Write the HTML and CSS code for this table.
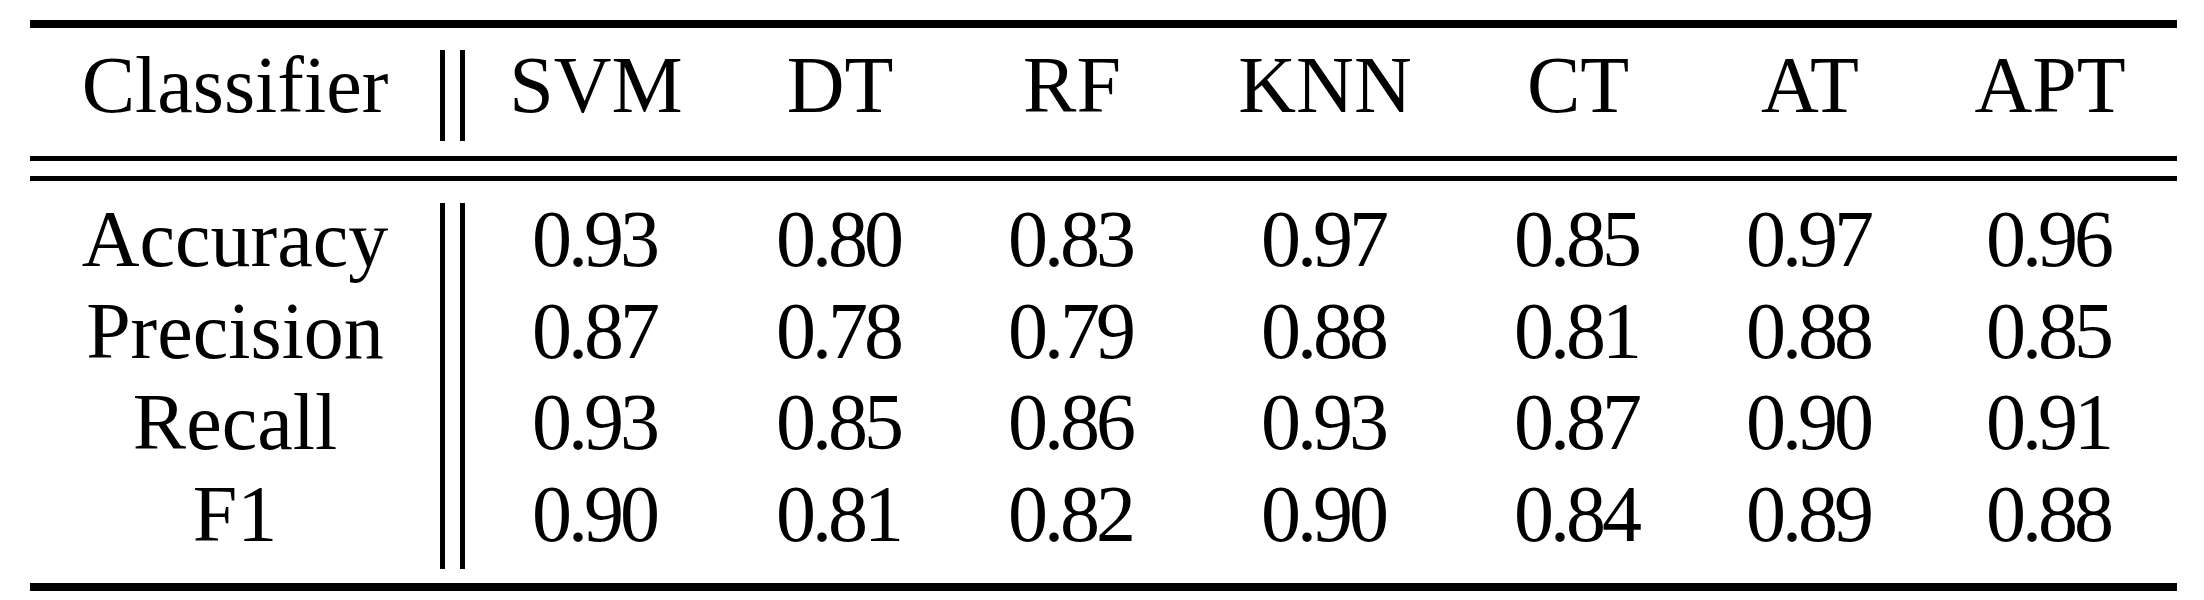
FILE: index.html
```html
<!DOCTYPE html>
<html lang="en">
<head>
<meta charset="utf-8">
<title>Classifier comparison</title>
<link rel="stylesheet" href="styles.css">
</head>
<body>
<div class="table">
  <div class="rule-thick"></div>
  <div class="grid head">
    <div class="cell">Classifier</div>
    <div class="bars"></div>
    <div class="cell">SVM</div>
    <div class="cell">DT</div>
    <div class="cell">RF</div>
    <div class="cell">KNN</div>
    <div class="cell">CT</div>
    <div class="cell">AT</div>
    <div class="cell">APT</div>
  </div>
  <div class="rule-double"></div>
  <div class="grid body">
    <div class="bars"></div>
    <div class="cell">Accuracy</div>
    <div class="cell num c3">0.93</div><div class="cell num">0.80</div><div class="cell num">0.83</div><div class="cell num">0.97</div><div class="cell num">0.85</div><div class="cell num">0.97</div><div class="cell num">0.96</div>
    <div class="cell">Precision</div>
    <div class="cell num c3">0.87</div><div class="cell num">0.78</div><div class="cell num">0.79</div><div class="cell num">0.88</div><div class="cell num">0.81</div><div class="cell num">0.88</div><div class="cell num">0.85</div>
    <div class="cell">Recall</div>
    <div class="cell num c3">0.93</div><div class="cell num">0.85</div><div class="cell num">0.86</div><div class="cell num">0.93</div><div class="cell num">0.87</div><div class="cell num">0.90</div><div class="cell num">0.91</div>
    <div class="cell">F1</div>
    <div class="cell num c3">0.90</div><div class="cell num">0.81</div><div class="cell num">0.82</div><div class="cell num">0.90</div><div class="cell num">0.84</div><div class="cell num">0.89</div><div class="cell num">0.88</div>
  </div>
  <div class="rule-thick"></div>
</div>
</body>
</html>
```
FILE: styles.css
```css
html, body {
  margin: 0;
  padding: 0;
  background: #ffffff;
}

body {
  font-family: "Liberation Serif", "Times New Roman", serif;
  color: #000000;
}

.table {
  width: 2147px;
  margin: 20px 0 0 30px;
}

.rule-thick {
  height: 8px;
  background: #000000;
}

.rule-double {
  height: 25px;
  box-sizing: border-box;
  border-top: 5px solid #000000;
  border-bottom: 5px solid #000000;
}

.grid {
  display: grid;
  grid-template-columns: 410px 25px 262px 226px 238px 268px 238px 226px 254px;
  grid-auto-rows: 91.67px;
  font-size: 80px;
  line-height: 91.67px;
}

.cell {
  text-align: center;
  white-space: nowrap;
}

.num {
  letter-spacing: -4px;
  padding-right: 4px;
}

.head {
  padding: 12.2px 0 24.1px;
}

.head .bars {
  margin-top: 9.8px;
  margin-bottom: -9.1px;
}

.body {
  padding: 13.2px 0 22.1px;
}

.body .bars {
  grid-column: 2;
  grid-row: 1 / span 4;
  margin-top: 8.8px;
  margin-bottom: -8.1px;
}

.body .c3 {
  grid-column: 3;
}

.bars {
  box-sizing: border-box;
  border-left: 5px solid #000000;
  border-right: 5px solid #000000;
}
```
